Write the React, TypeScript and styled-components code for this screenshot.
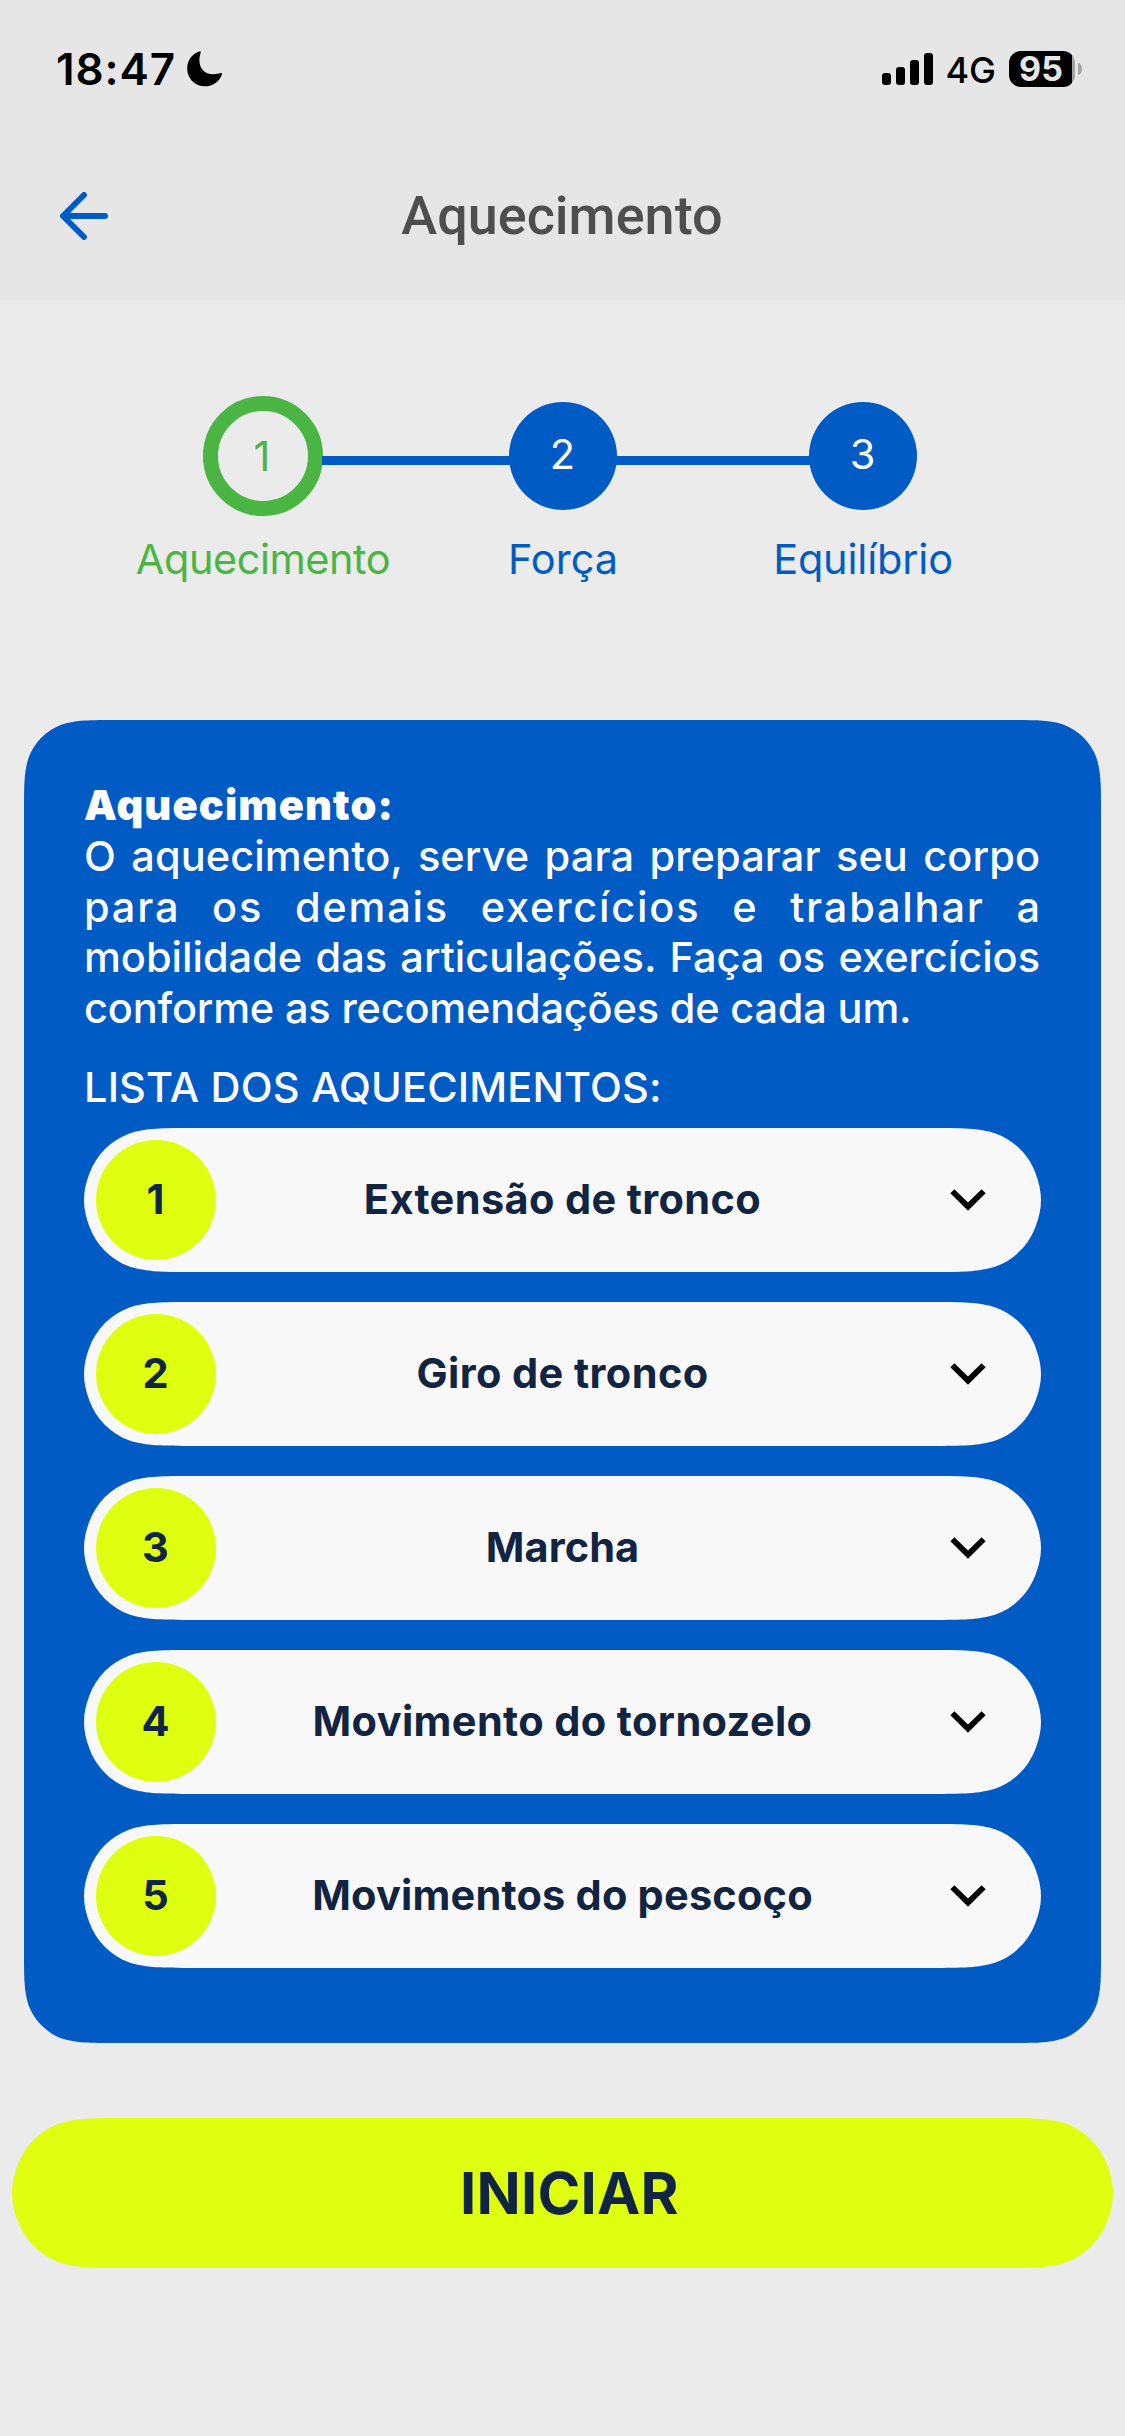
import React from "react";
import styled, { createGlobalStyle } from "styled-components";

const color = {
  header: "#e6e6e6",
  page: "#ebebeb",
  blue: "#005bc5",
  green: "#4bb543",
  lime: "#dfff10",
  navy: "#112542",
  title: "#4e4e4e",
  row: "#f8f8f8",
};

const GlobalStyle = createGlobalStyle`
  * { box-sizing: border-box; }
  body {
    margin: 0;
    background: ${color.page};
    font-family: Inter, "Liberation Sans", sans-serif;
  }
`;

/* Rounded rectangle with the smooth, continuous corners used on iOS. */
function smoothRect(w: number, h: number, r: number): string {
  const pill = r * 2 >= h;
  const corner = (x: number, y: number, sx: number, sy: number, fromSide: boolean) => {
    const p = (a: number, b: number) =>
      `${(x + sx * a * r).toFixed(2)} ${(y + sy * b * r).toFixed(2)}`;
    const pts = [
      p(1.5287, 0), p(1.0885, 0), p(0.8684, 0), p(0.6315, 0.0749),
      p(0.3728, 0.1691), p(0.1691, 0.3728), p(0.0749, 0.6315),
      pill ? p(0.03, 0.75) : p(0, 0.8684),
      pill ? p(0, 0.87) : p(0, 1.0885),
      pill ? p(0, 1) : p(0, 1.5287),
    ];
    if (fromSide) pts.reverse();
    const [a, ...c] = pts;
    return `L${a} C${c.slice(0, 3).join(" ")} C${c.slice(3, 6).join(" ")} C${c.slice(6).join(" ")}`;
  };
  return (
    `M${w / 2} 0 ` +
    corner(w, 0, -1, 1, false) + " " +
    corner(w, h, -1, -1, true) + " " +
    corner(0, h, 1, -1, false) + " " +
    corner(0, 0, 1, 1, true) + " Z"
  );
}

const Screen = styled.div`
  width: 1125px;
  height: 2436px;
  display: flex;
  flex-direction: column;
  background: ${color.page};
  overflow: hidden;
`;

const Header = styled.header`
  height: 300px;
  flex: none;
  background: ${color.header};
`;

const StatusBar = styled.div`
  height: 138px;
  padding: 0 43px 0 56px;
  display: flex;
  align-items: center;
  justify-content: space-between;
  color: #000;
`;

const StatusGroup = styled.div`
  display: flex;
  align-items: center;
`;

const Time = styled.span`
  font-size: 44px;
  font-weight: 600;
  letter-spacing: 0.9px;
  margin-right: 11px;
`;

const Network = styled.span`
  font-size: 36px;
  font-weight: 500;
  margin: 2px 13px 0 12px;
`;

const Battery = styled.div`
  width: 66px;
  height: 36px;
  padding-right: 2px;
  border-radius: 12px;
  background: linear-gradient(90deg, #000 63px, #a4a4a4 63px);
  color: ${color.header};
  font-size: 34px;
  font-weight: 700;
  line-height: 36px;
  text-align: center;
`;

const BatteryNub = styled.div`
  width: 4px;
  height: 12px;
  margin-left: 3px;
  border-radius: 0 4px 4px 0 / 0 6px 6px 0;
  background: #a4a4a4;
`;

const NavBar = styled.div`
  height: 156px;
  padding: 0 61px 0 60px;
  display: grid;
  grid-template-columns: 1fr auto 1fr;
  align-items: center;
`;

const BackButton = styled.button`
  width: 48px;
  height: 48px;
  padding: 0;
  border: 0;
  background: none;
  display: flex;
`;

const ScreenTitle = styled.h1`
  margin: 0;
  font-family: Roboto, sans-serif;
  font-size: 54px;
  font-weight: 500;
  line-height: 64px;
  color: ${color.title};
`;

const Stepper = styled.section`
  padding-top: 96px;
`;

const StepTrack = styled.div`
  height: 120px;
  padding-left: 203px;
  display: flex;
  align-items: center;
`;

const StepCircle = styled.div<{ $active?: boolean }>`
  width: ${(p) => (p.$active ? 120 : 108)}px;
  height: ${(p) => (p.$active ? 120 : 108)}px;
  flex: none;
  display: flex;
  align-items: center;
  justify-content: center;
  padding: ${(p) => (p.$active ? "0 2px 0 0" : "0 1px 4px 0")};
  border-radius: 50%;
  border: ${(p) => (p.$active ? `15px solid ${color.green}` : "0")};
  background: ${(p) => (p.$active ? "transparent" : color.blue)};
  color: ${(p) => (p.$active ? color.green : "#fff")};
  font-size: 41.5px;
`;

const StepLine = styled.div<{ $length: number }>`
  width: ${(p) => p.$length + 2}px;
  height: 9px;
  margin: 9px -1px 0;
  background: ${color.blue};
`;

const StepLabels = styled.div`
  display: grid;
  grid-template-columns: repeat(3, 300px);
  padding-left: 113px;
  margin-top: 18px;
`;

const StepLabel = styled.span<{ $active?: boolean; $track: number }>`
  text-align: center;
  font-size: 41.5px;
  line-height: 50px;
  letter-spacing: ${(p) => p.$track}px;
  color: ${(p) => (p.$active ? color.green : color.blue)};
`;

const Card = styled.section`
  width: 1077px;
  height: 1323px;
  margin: 136px auto 0;
  padding: 60px 60px 75px;
  background: ${color.blue};
  clip-path: path("${smoothRect(1077, 1323, 60)}");
  color: #fff;
  font-size: 41.5px;
`;

const CardTitle = styled.h2`
  margin: 0;
  font-size: 41.5px;
  font-weight: 900;
  line-height: 51px;
  letter-spacing: 1.15px;
`;

const Description = styled.p`
  margin: 0;
  font-weight: 500;
  line-height: 50.5px;
`;

const Line = styled.span<{ $track: number; $last?: boolean }>`
  display: block;
  margin-right: ${(p) => -p.$track}px;
  padding-right: 1px;
  white-space: nowrap;
  letter-spacing: ${(p) => p.$track}px;
  text-align: justify;
  text-align-last: ${(p) => (p.$last ? "left" : "justify")};
`;

const ListHeading = styled.h3`
  margin: 29px 0 16px;
  font-size: 41.5px;
  font-weight: 540;
  line-height: 50px;
  letter-spacing: 0.17px;
`;

const List = styled.div`
  display: flex;
  flex-direction: column;
  gap: 30px;
`;

const Row = styled.div`
  height: 144px;
  padding: 12px;
  display: grid;
  grid-template-columns: 120px 1fr 120px;
  align-items: center;
  background: ${color.row};
  clip-path: path("${smoothRect(957, 144, 72)}");
  color: ${color.navy};
  font-weight: 700;
`;

const Badge = styled.div`
  height: 120px;
  padding-right: 1px;
  border-radius: 50%;
  background: ${color.lime};
  line-height: 118px;
  text-align: center;
`;

const RowTitle = styled.span<{ $track: number }>`
  margin-bottom: 2px;
  text-align: center;
  line-height: 50px;
  letter-spacing: ${(p) => p.$track}px;
`;

const Chevron = styled.svg`
  justify-self: center;
  margin-right: 2px;
`;

const StartButton = styled.button`
  width: 1101px;
  height: 150px;
  margin: 75px auto 0;
  padding: 0 0 0 14px;
  border: 0;
  background: ${color.lime};
  clip-path: path("${smoothRect(1101, 150, 75)}");
  color: ${color.navy};
  font-family: inherit;
  font-size: 58px;
  font-weight: 700;
  line-height: 150px;
  letter-spacing: 0.2px;
`;

const exercises = [
  { name: "Extensão de tronco", track: 0.36 },
  { name: "Giro de tronco", track: 0.4 },
  { name: "Marcha", track: 0.1 },
  { name: "Movimento do tornozelo", track: 0.37 },
  { name: "Movimentos do pescoço", track: 0.2 },
];

export default function App() {
  return (
    <Screen>
      <GlobalStyle />
      <Header>
        <StatusBar>
          <StatusGroup>
            <Time>18:47</Time>
            <svg width="36" height="36" viewBox="0 0 36 36">
              <path d="M13.6.6C14 .8 13.9 1.3 13.7 1.8C13 4 12.4 6.5 12.4 9.3C12.4 17.5 17.5 23.2 26 23.2C29 23.2 31.5 22.8 33.8 22.1C34.8 21.8 35.3 22.5 34.9 23.4C32.5 30.5 26 35.3 18 35.3C7.8 35.3 .2 27.5 .2 17.5C.2 9.8 4.7 3.3 12 .6C12.6 .3 13.2 .3 13.6 .6Z" />
            </svg>
          </StatusGroup>
          <StatusGroup>
            <svg width="51" height="32" viewBox="0 0 51 32">
              <rect x="0" y="20" width="9" height="12" rx="3" />
              <rect x="14" y="14" width="9" height="18" rx="3" />
              <rect x="28" y="7" width="9" height="25" rx="3" />
              <rect x="42" y="0" width="9" height="32" rx="3" />
            </svg>
            <Network>4G</Network>
            <Battery>95</Battery>
            <BatteryNub />
          </StatusGroup>
        </StatusBar>
        <NavBar>
          <BackButton aria-label="Voltar">
            <svg width="48" height="48" viewBox="0 0 48 48" fill="none" stroke={color.blue} strokeWidth="6" strokeLinecap="round" strokeLinejoin="round">
              <path d="M24 3L3 24L24 45M4 24H45" />
            </svg>
          </BackButton>
          <ScreenTitle>Aquecimento</ScreenTitle>
        </NavBar>
      </Header>

      <Stepper>
        <StepTrack>
          <StepCircle $active>1</StepCircle>
          <StepLine $length={186} />
          <StepCircle>2</StepCircle>
          <StepLine $length={192} />
          <StepCircle>3</StepCircle>
        </StepTrack>
        <StepLabels>
          <StepLabel $active $track={-0.48}>Aquecimento</StepLabel>
          <StepLabel $track={0}>Força</StepLabel>
          <StepLabel $track={-0.2}>Equilíbrio</StepLabel>
        </StepLabels>
      </Stepper>

      <Card>
        <CardTitle>Aquecimento:</CardTitle>
        <Description>
          <Line $track={0.1}>O aquecimento, serve para preparar seu corpo</Line>
          <Line $track={1.8}>para os demais exercícios e trabalhar a</Line>
          <Line $track={0}>mobilidade das articulações. Faça os exercícios</Line>
          <Line $track={-0.18} $last>conforme as recomendações de cada um.</Line>
        </Description>
        <ListHeading>LISTA DOS AQUECIMENTOS:</ListHeading>
        <List>
          {exercises.map((exercise, index) => (
            <Row key={exercise.name}>
              <Badge>{index + 1}</Badge>
              <RowTitle $track={exercise.track}>{exercise.name}</RowTitle>
              <Chevron width="36" height="24" viewBox="0 0 36 24" fill="none" stroke="#000" strokeWidth="5.8">
                <path d="M2.4 3.2L18 18.6L33.6 3.2" />
              </Chevron>
            </Row>
          ))}
        </List>
      </Card>

      <StartButton>INICIAR</StartButton>
    </Screen>
  );
}
